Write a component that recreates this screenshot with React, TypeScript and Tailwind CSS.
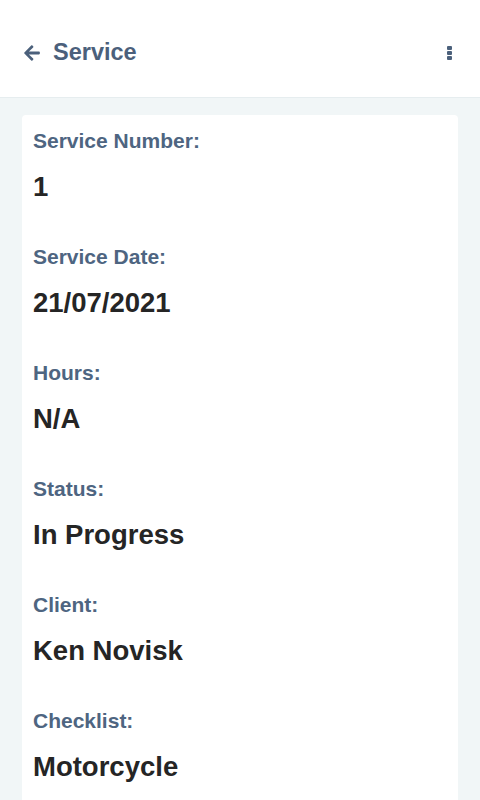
import { FaArrowLeft } from "react-icons/fa";

const fields = [
  { label: "Service Number:", value: "1" },
  { label: "Service Date:", value: "21/07/2021" },
  { label: "Hours:", value: "N/A" },
  { label: "Status:", value: "In Progress" },
  { label: "Client:", value: "Ken Novisk" },
  { label: "Checklist:", value: "Motorcycle" },
];

export default function App() {
  return (
    <div className="w-[480px] h-[800px] overflow-hidden bg-[#f1f6f7] font-['Liberation_Sans',Arial,sans-serif]">
      <header className="h-[98px] bg-white border-b border-[#e6edef] flex items-center justify-between pt-[8px] pl-[23px] pr-[28px]">
        <div className="flex items-center gap-[12px] text-[#4b607b]">
          <FaArrowLeft size={18} />
          <h1 className="text-[23.5px] font-bold leading-none">Service</h1>
        </div>
        <div className="flex flex-col gap-[1px]">
          <span className="w-[5px] h-[4px] bg-[#4b607b] rounded-[1px]" />
          <span className="w-[5px] h-[4px] bg-[#4b607b] rounded-[1px]" />
          <span className="w-[5px] h-[4px] bg-[#4b607b] rounded-[1px]" />
        </div>
      </header>

      <main className="px-[22px] pt-[17px]">
        <div className="bg-white rounded-[4px] px-[11px] pt-[14px] pb-[40px] flex flex-col gap-[42px]">
          {fields.map((f) => (
            <div key={f.label} className="flex flex-col gap-[18px]">
              <p className="text-[21px] leading-[24px] font-bold text-[#4e6581]">{f.label}</p>
              <p className="text-[27.5px] leading-[32px] font-bold text-[#252525]">{f.value}</p>
            </div>
          ))}
        </div>
      </main>
    </div>
  );
}
